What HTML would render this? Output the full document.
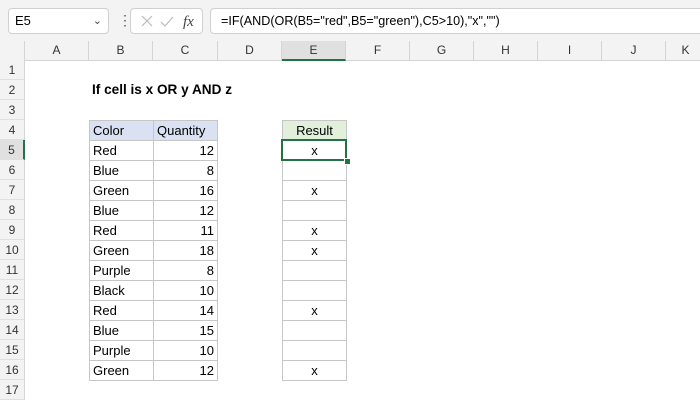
<!DOCTYPE html><html><head><style>
body{margin:0;width:700px;height:400px;overflow:hidden;background:#fff;font-family:"Liberation Sans",sans-serif;position:relative}
.a{position:absolute;box-sizing:border-box}
.ch{top:41px;height:20px;background:#f3f3f3;border-right:1px solid #d4d4d4;border-bottom:1px solid #d4d4d4;text-align:center;font-size:12px;line-height:19px;color:#333}
.rh{left:0;width:25px;height:20px;background:#f3f3f3;border-right:1px solid #d4d4d4;border-bottom:1px solid #e0e0e0;text-align:center;font-size:12px;line-height:20px;color:#333}
.c{height:21px;border:1px solid #c6c6c6;font-size:13px;line-height:19px;padding:0 3px;color:#000}
</style></head><body>
<div class="a" style="left:0;top:0;width:700px;height:41px;background:#f3f3f3"></div>
<div class="a" style="left:8px;top:8px;width:101px;height:26px;background:#fff;border:1px solid #d0d0d0;border-radius:4px;font-size:13px;line-height:24px;padding-left:6px">E5<span style="position:absolute;right:6px;top:0;font-size:11px;color:#444">&#8964;</span></div>
<div class="a" style="left:118px;top:13px;font-size:14px;line-height:14px;color:#555">&#8942;</div>
<div class="a" style="left:130px;top:8px;width:73px;height:26px;background:#fff;border:1px solid #d0d0d0;border-radius:4px"></div>
<svg class="a" style="left:138px;top:13px" width="60" height="16"><path d="M4 3l10 10M14 3L4 13" stroke="#bbb" stroke-width="1.2" fill="none"/><path d="M23 9l4 4 8-9" stroke="#bbb" stroke-width="1.2" fill="none"/><text x="45" y="13" font-family="Liberation Serif" font-style="italic" font-size="15" fill="#444">fx</text></svg>
<div class="a" style="left:210px;top:8px;width:495px;height:26px;background:#fff;border:1px solid #d0d0d0;border-radius:4px;font-size:12.6px;line-height:24px;padding-left:10px">=IF(AND(OR(B5="red",B5="green"),C5&gt;10),"x","")</div>
<div class="a ch" style="left:0;width:25px"></div>
<div class="a ch" style="left:25px;width:64px">A</div><div class="a ch" style="left:89px;width:64px">B</div><div class="a ch" style="left:153px;width:65px">C</div><div class="a ch" style="left:218px;width:64px">D</div><div class="a ch" style="left:282px;width:64px;background:#e0e0e0;border-bottom:2px solid #217346">E</div><div class="a ch" style="left:346px;width:64px">F</div><div class="a ch" style="left:410px;width:64px">G</div><div class="a ch" style="left:474px;width:64px">H</div><div class="a ch" style="left:538px;width:64px">I</div><div class="a ch" style="left:602px;width:64px">J</div><div class="a ch" style="left:666px;width:40px">K</div>
<div class="a rh" style="top:60px">1</div><div class="a rh" style="top:80px">2</div><div class="a rh" style="top:100px">3</div><div class="a rh" style="top:120px">4</div><div class="a rh" style="top:140px;background:#e0e0e0;border-right:2px solid #217346">5</div><div class="a rh" style="top:160px">6</div><div class="a rh" style="top:180px">7</div><div class="a rh" style="top:200px">8</div><div class="a rh" style="top:220px">9</div><div class="a rh" style="top:240px">10</div><div class="a rh" style="top:260px">11</div><div class="a rh" style="top:280px">12</div><div class="a rh" style="top:300px">13</div><div class="a rh" style="top:320px">14</div><div class="a rh" style="top:340px">15</div><div class="a rh" style="top:360px">16</div><div class="a rh" style="top:380px">17</div>
<div class="a" style="left:92px;top:80px;font-size:13.6px;font-weight:bold;line-height:20px">If cell is x OR y AND z</div>
<div class="a c" style="left:89px;top:120px;width:65px;background:#d9e1f2">Color</div><div class="a c" style="left:153px;top:120px;width:65px;background:#d9e1f2">Quantity</div>
<div class="a c" style="left:282px;top:120px;width:65px;background:#e2efda;text-align:center">Result</div>
<div class="a c" style="left:89px;top:140px;width:65px">Red</div><div class="a c" style="left:153px;top:140px;width:65px;text-align:right">12</div><div class="a c" style="left:282px;top:140px;width:65px;text-align:center">x</div>
<div class="a c" style="left:89px;top:160px;width:65px">Blue</div><div class="a c" style="left:153px;top:160px;width:65px;text-align:right">8</div><div class="a c" style="left:282px;top:160px;width:65px;text-align:center"></div>
<div class="a c" style="left:89px;top:180px;width:65px">Green</div><div class="a c" style="left:153px;top:180px;width:65px;text-align:right">16</div><div class="a c" style="left:282px;top:180px;width:65px;text-align:center">x</div>
<div class="a c" style="left:89px;top:200px;width:65px">Blue</div><div class="a c" style="left:153px;top:200px;width:65px;text-align:right">12</div><div class="a c" style="left:282px;top:200px;width:65px;text-align:center"></div>
<div class="a c" style="left:89px;top:220px;width:65px">Red</div><div class="a c" style="left:153px;top:220px;width:65px;text-align:right">11</div><div class="a c" style="left:282px;top:220px;width:65px;text-align:center">x</div>
<div class="a c" style="left:89px;top:240px;width:65px">Green</div><div class="a c" style="left:153px;top:240px;width:65px;text-align:right">18</div><div class="a c" style="left:282px;top:240px;width:65px;text-align:center">x</div>
<div class="a c" style="left:89px;top:260px;width:65px">Purple</div><div class="a c" style="left:153px;top:260px;width:65px;text-align:right">8</div><div class="a c" style="left:282px;top:260px;width:65px;text-align:center"></div>
<div class="a c" style="left:89px;top:280px;width:65px">Black</div><div class="a c" style="left:153px;top:280px;width:65px;text-align:right">10</div><div class="a c" style="left:282px;top:280px;width:65px;text-align:center"></div>
<div class="a c" style="left:89px;top:300px;width:65px">Red</div><div class="a c" style="left:153px;top:300px;width:65px;text-align:right">14</div><div class="a c" style="left:282px;top:300px;width:65px;text-align:center">x</div>
<div class="a c" style="left:89px;top:320px;width:65px">Blue</div><div class="a c" style="left:153px;top:320px;width:65px;text-align:right">15</div><div class="a c" style="left:282px;top:320px;width:65px;text-align:center"></div>
<div class="a c" style="left:89px;top:340px;width:65px">Purple</div><div class="a c" style="left:153px;top:340px;width:65px;text-align:right">10</div><div class="a c" style="left:282px;top:340px;width:65px;text-align:center"></div>
<div class="a c" style="left:89px;top:360px;width:65px">Green</div><div class="a c" style="left:153px;top:360px;width:65px;text-align:right">12</div><div class="a c" style="left:282px;top:360px;width:65px;text-align:center">x</div>
<div class="a" style="left:281px;top:139px;width:66px;height:22px;border:2px solid #217346"></div>
<div class="a" style="left:344px;top:158px;width:5px;height:5px;background:#217346;border:1px solid #fff;box-sizing:content-box"></div>
</body></html>
